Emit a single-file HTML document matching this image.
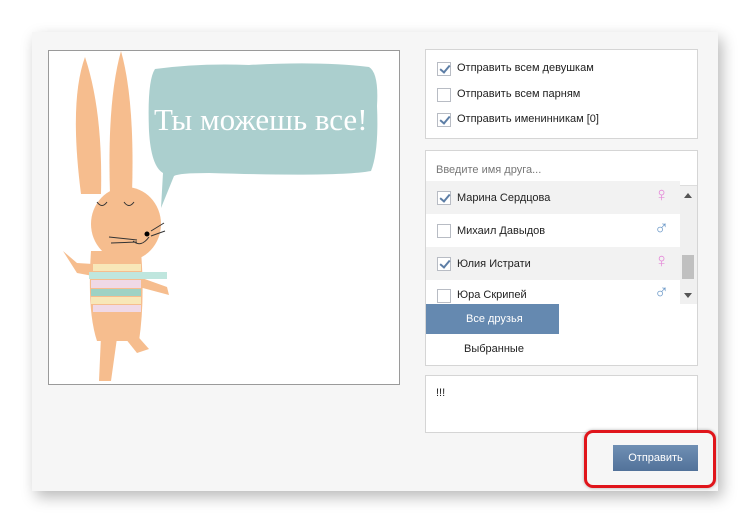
<!DOCTYPE html>
<html><head><meta charset="utf-8"><style>
body{margin:0;width:751px;height:523px;background:#fff;font-family:"Liberation Sans",sans-serif;position:relative;overflow:hidden}
.panel{position:absolute;left:32px;top:32px;width:686px;height:459px;background:#f6f6f6;box-shadow:4px 6px 14px rgba(0,0,0,.28)}
.frame{position:absolute;left:48px;top:50px;width:350px;height:333px;background:#fff;border:1px solid #9a9a9a}
.box{position:absolute;left:425px;width:271px;background:#fff;border:1px solid #d5d5d5}
.cb{position:absolute;width:12px;height:12px;border:1px solid #b8bcc4;background:#fff}
.cb.on::after{content:"";position:absolute;left:4px;top:0px;width:4px;height:8px;border:solid #5d7ea6;border-width:0 2px 2px 0;transform:rotate(40deg)}
.t{position:absolute;font-size:11px;color:#222;white-space:nowrap}
.row{position:absolute;left:0;width:254px;height:33px}
.fem{position:absolute;color:#e58bd9;font-size:20px;font-weight:bold}
.mal{position:absolute;color:#6f9bc9;font-size:20px;font-weight:bold}
</style></head><body>
<div class="panel"></div>
<div class="frame">
<svg width="350" height="333" viewBox="0 0 350 333">
<path d="M106 18 Q150 12 200 14 Q270 10 320 16 Q330 22 328 55 Q330 100 322 120 Q290 126 160 122 Q130 122 125 125 L112 157 L114 122 Q102 115 100 80 Q98 30 106 18Z" fill="#9cc7c6" opacity=".85"/>
<text x="105" y="79" font-family="Liberation Serif,serif" font-size="31" fill="#fff">Ты можешь все!</text>
<g fill="#f6bd8e">
<path d="M36 6 Q20 50 32 143 L52 143 Q54 60 36 6Z"/>
<path d="M72 0 Q58 50 61 143 L83 143 Q86 50 72 0Z"/>
<ellipse cx="77" cy="173" rx="35" ry="37"/>
<path d="M42 200 Q38 260 48 290 L90 290 Q96 250 92 200Z"/>
<path d="M14 200 L28 222 L60 228 L60 214 L28 212Z"/>
<path d="M90 226 L118 236 L120 244 L90 236Z"/>
<path d="M52 285 L50 330 L62 330 L68 287Z"/>
<path d="M72 282 L88 302 L100 298 L84 280Z"/>
</g>
<g>
<rect x="44" y="213" width="48" height="7" fill="#f8e7b8"/>
<rect x="40" y="221" width="78" height="7" fill="#bfe6de"/>
<rect x="42" y="229" width="50" height="8" fill="#f0d9e6"/>
<rect x="42" y="238" width="50" height="7" fill="#9ed2c4"/>
<rect x="42" y="246" width="50" height="7" fill="#f8e7b8"/>
<rect x="44" y="254" width="48" height="7" fill="#f0d9e6"/>
</g>
<circle cx="98" cy="183" r="2.5" fill="#000"/>
<path d="M48 151 Q53 158 58 151 M75 151 Q80 158 85 151 M84 190 Q92 197 100 186 M60 186 L88 189 M62 192 L88 191 M102 180 L115 172 M102 185 L116 180" stroke="#333" fill="none" stroke-width="1"/>
</svg>
</div>
<div class="box" style="top:49px;height:88px">
<div class="cb on" style="left:11px;top:12px"></div><div class="t" style="left:31px;top:12px">Отправить всем девушкам</div>
<div class="cb" style="left:11px;top:38px"></div><div class="t" style="left:31px;top:38px">Отправить всем парням</div>
<div class="cb on" style="left:11px;top:63px"></div><div class="t" style="left:31px;top:63px">Отправить именинникам [0]</div>
</div>
<div class="box" style="top:150px;height:214px">
<div class="t" style="left:10px;top:13px;color:#777">Введите имя друга...</div>
<div style="position:absolute;left:0;top:34px;width:271px;border-top:1px solid #ddd"></div>
<div class="row" style="top:30px;background:#f2f2f2"><div class="cb on" style="left:11px;top:10px"></div><div class="t" style="left:31px;top:11px">Марина Сердцова</div><div class="fem" style="left:228px;top:3px">♀</div></div>
<div class="row" style="top:63px"><div class="cb" style="left:11px;top:10px"></div><div class="t" style="left:31px;top:11px">Михаил Давыдов</div><div class="mal" style="left:228px;top:3px">♂</div></div>
<div class="row" style="top:96px;background:#f2f2f2"><div class="cb on" style="left:11px;top:10px"></div><div class="t" style="left:31px;top:11px">Юлия Истрати</div><div class="fem" style="left:228px;top:3px">♀</div></div>
<div class="row" style="top:129px;height:24px;overflow:hidden"><div class="cb" style="left:11px;top:9px"></div><div class="t" style="left:31px;top:9px">Юра Скрипей</div><div class="mal" style="left:228px;top:1px">♂</div></div>
<div style="position:absolute;left:254px;top:35px;width:17px;height:118px;background:#f0f0f0"></div>
<div style="position:absolute;left:258px;top:42px;border:4px solid transparent;border-bottom:5px solid #555;border-top:0"></div>
<div style="position:absolute;left:256px;top:104px;width:12px;height:24px;background:#c0c0c0"></div>
<div style="position:absolute;left:258px;top:142px;border:4px solid transparent;border-top:5px solid #555;border-bottom:0"></div>
<div style="position:absolute;left:0;top:153px;width:133px;height:30px;background:#6589b0"></div>
<div class="t" style="left:40px;top:162px;color:#fff">Все друзья</div>
<div class="t" style="left:38px;top:192px">Выбранные</div>
</div>
<div class="box" style="top:375px;height:56px"><div class="t" style="left:10px;top:11px">!!!</div></div>
<div style="position:absolute;left:584px;top:430px;width:126px;height:52px;border:3px solid #e0151b;border-radius:9px;box-shadow:0 0 3px rgba(0,0,0,.3)"></div>
<div style="position:absolute;left:613px;top:445px;width:85px;height:26px;background:linear-gradient(#6f8fb4,#52729a);color:#fff;font-size:11px;text-align:center;line-height:26px">Отправить</div>
</body></html>
